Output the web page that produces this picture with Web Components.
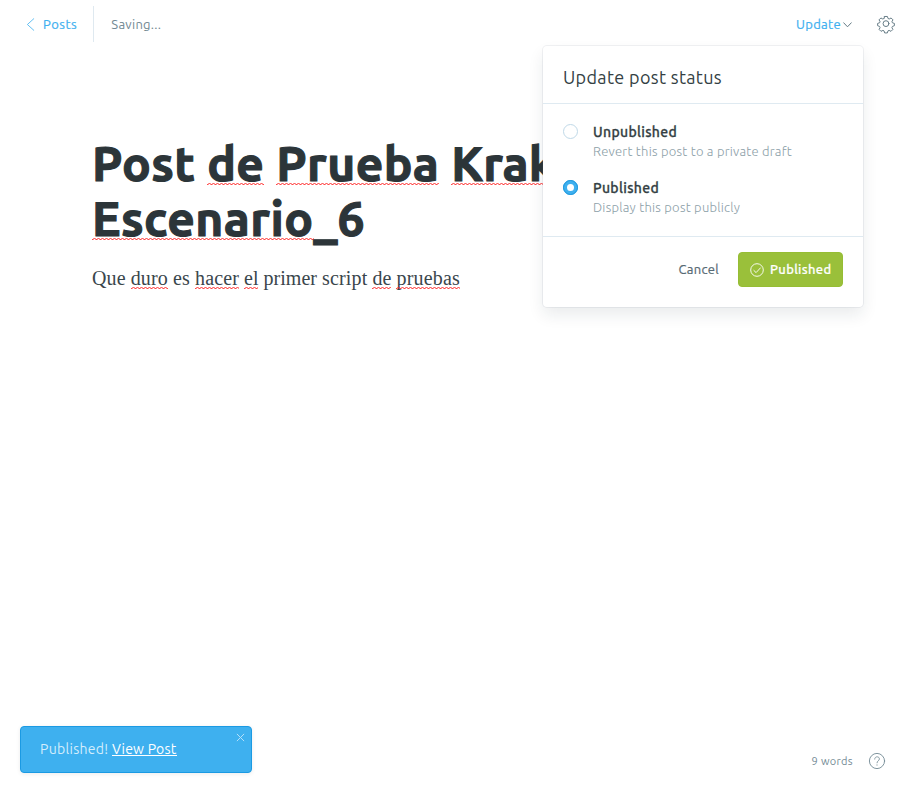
<!DOCTYPE html>
<html lang="es"><head><meta charset="utf-8"><title>Editor</title>
<style>html,body{margin:0;height:100%;background:#fff;overflow:hidden}</style></head><body>
<editor-app></editor-app>
<script>
const define=(name,html,init)=>customElements.define(name,class extends HTMLElement{
  constructor(){super();this.attachShadow({mode:'open'}).innerHTML=html;}
  connectedCallback(){if(init)init.call(this);}
});

/* Text run spaced to a given advance width; "wavy" adds a spelling mark. */
define('text-run',`<style>
:host{display:inline-block;white-space:pre;position:relative}
span{display:inline-block}
:host([wavy])::after{content:"";position:absolute;left:0;right:0;bottom:var(--mark,0px);height:2px;
background:url("data:image/svg+xml,%3Csvg xmlns='http://www.w3.org/2000/svg' width='4' height='2'%3E%3Cpath d='M0 1.5h.8L2.2.5h.6L4.2 1.5' fill='none' stroke='%23ff2020' stroke-width='1'/%3E%3C/svg%3E") repeat-x}
</style><span><slot></slot></span>`,function(){
  const w=+this.getAttribute('w'),s=this.shadowRoot.querySelector('span');
  if(!w)return;
  const n=this.textContent.length;
  this.style.width=w+'px';
  s.style.letterSpacing=((w-s.getBoundingClientRect().width)/n)+'px';
});

define('top-bar',`<style>
:host{display:flex;height:48px;align-items:center;box-sizing:border-box;padding:0 15px 0 26px;font-size:13px;line-height:20px}
.posts{display:flex;align-items:center;color:#3eb0ef;gap:8px;padding-right:16px;height:36px;border-right:1px solid #dfe9f0}
.save{color:#738a94;margin-left:17px;flex:1}
.up{display:flex;align-items:center;color:#3eb0ef;gap:2px;margin-right:26px}
svg{display:block;fill:none;stroke-linecap:round;stroke-linejoin:round}
.posts text-run,.up text-run{-webkit-text-stroke:.2px}
</style>
<div class="posts"><svg width="9" height="13" viewBox="0 0 9 13" stroke="#3eb0ef" stroke-width=".8"><path d="M7.8 .7L1.4 6.5l6.4 5.8"/></svg><text-run w="34.3">Posts</text-run></div>
<div class="save"><text-run w="50">Saving...</text-run></div>
<div class="up"><text-run w="45">Update</text-run><svg width="9" height="6" viewBox="0 0 9 6" stroke="#657b85" stroke-width="1" style="margin-top:1px"><path d="M.7 .8l3.8 4L8.3.8"/></svg></div>
<svg width="16" height="16" viewBox="-8.5 -8.1 17 17" stroke="#657b85" stroke-width="1.05" style="overflow:visible"><circle r="3.1"/><path d="M-1.5-7.6h3l.6 2.1 1.3.6 2-1.1 2 2-1.1 2 .5 1.1 2.1.7v2.4l-2.1.8-.5 1.2 1 2-2 2-2-1-1.2.5-.7 2.2h-2.8l-.7-2.2-1.2-.5-2 1-2-2 1-2-.5-1.2-2.1-.8v-2.4l2.1-.7.5-1.1-1.1-2 2-2 2 1.1 1.3-.6z"/></svg>`);

define('post-body',`<style>
:host{display:block;padding:88px 92px 0;color:#2c3539}
h1{margin:0;font:700 48px/55px Ubuntu,"Open Sans",sans-serif;-webkit-text-stroke:1.1px;--mark:6px}
.line{display:flex;height:55px}
.gap{gap:12px}
p{margin:16px 0 0;display:flex;font:20px/32px "Liberation Serif",serif;color:#3a464c;--mark:5px;gap:5px}
</style>
<h1><div class="line gap"><text-run w="103.3">Post</text-run><text-run w="57" wavy>de</text-run><text-run w="163" wavy>Prueba</text-run><text-run wavy>Krak</text-run></div>
<div class="line"><text-run w="221.5" wavy>Escenario</text-run><text-run w="24">_</text-run><text-run w="28">6</text-run></div></h1>
<p><text-run w="33.7">Que</text-run><text-run w="37.3" wavy>duro</text-run><text-run w="17">es</text-run><text-run w="44" wavy>hacer</text-run><text-run w="14.5" wavy>el</text-run><text-run w="53.5">primer</text-run><text-run w="45.5">script</text-run><text-run w="19" wavy>de</text-run><text-run w="63.5" wavy>pruebas</text-run></p>`);

define('radio-option',`<style>
:host{display:flex;gap:15px;height:40px}
i{box-sizing:border-box;width:15px;height:15px;margin-top:4px;border:1px solid #c0d9e8;border-radius:50%;background:#fff}
:host([checked]) i{border:4px solid #3eb0ef;outline:1px solid #2198dc;outline-offset:-1px}
b,small{display:block}
b{font-size:14px;font-weight:500;-webkit-text-stroke:.3px;color:#343f44;line-height:24px;height:22px}
small{font-size:13px;font-weight:300;color:#8b9ea7;line-height:19px}
</style><i></i><div><b><slot name="title"></slot></b><small><slot></slot></small></div>`);

define('status-menu',`<style>
:host{display:flex;flex-direction:column;position:absolute;left:543px;top:46px;width:320px;height:261px;background:#fff;border-radius:4px;box-shadow:0 0 0 1px rgba(99,114,130,.09),0 8px 16px rgba(27,39,51,.09)}
header{box-sizing:border-box;height:58px;padding:18px 20px 0;border-bottom:1px solid #dfeaf1;font-size:18px;line-height:26px;color:#343f44}
main{box-sizing:border-box;height:133px;padding:16px 20px;border-bottom:1px solid #dfeaf1;display:flex;flex-direction:column;gap:16px}
footer{display:flex;align-items:center;justify-content:flex-end;padding:15px 20px 0;gap:19px;font-size:13px;color:#566973}
footer text-run{padding-bottom:2px;-webkit-text-stroke:.2px}
button{box-sizing:border-box;width:105px;height:35px;border:1px solid #96bd34;border-radius:4px;background:#9ac03a;color:#fff;font:500 13px Ubuntu,"Open Sans",sans-serif;padding:0 0 0 11px;display:flex;align-items:center;gap:6px}
svg{fill:none;stroke:#fff;stroke-width:.9;flex:none}
</style>
<header><text-run w="159">Update post status</text-run></header>
<main><radio-option><text-run slot="title" w="84">Unpublished</text-run><text-run w="199">Revert this post to a private draft</text-run></radio-option>
<radio-option checked><text-run slot="title" w="66">Published</text-run><text-run w="147.2">Display this post publicly</text-run></radio-option></main>
<footer><text-run w="40.5">Cancel</text-run><button><svg width="14" height="14" viewBox="0 0 14 14"><circle cx="7" cy="7" r="6.3"/><path d="M3.6 7.2l2.5 2.4 4.6-5"/></svg><text-run w="61.5">Published</text-run></button></footer>`);

define('toast-note',`<style>
:host{display:flex;box-sizing:border-box;position:absolute;left:20px;top:726px;width:232px;height:47px;padding:12px 6px 0 19px;justify-content:space-between;border:1px solid #1b9ae3;border-radius:4px;background:#3eb0ef;color:#d3edfc;font-size:14px;line-height:20px;box-shadow:0 1px 4px rgba(0,0,0,.08)}
div{display:flex}
a{color:#fff;height:16px;border-bottom:1px solid #fff}
svg{margin-top:-6px}
</style><div><text-run w="72">Published! </text-run><a><text-run w="64.5">View Post</text-run></a></div>
<svg width="9" height="9" viewBox="0 0 9 9" fill="none" stroke="#b5e0f9" stroke-width="1"><path d="M.9.9l7.2 7.2M8.1.9L.9 8.1"/></svg>`);

define('word-count',`<style>
:host{display:flex;align-items:center;gap:15px;position:absolute;right:23px;top:752px;height:18px;font-size:11px;color:#738a94}
svg{fill:none;stroke:#738a94;stroke-linecap:round}
</style><text-run w="41.5">9 words</text-run><svg width="18" height="18" viewBox="0 0 18 18"><circle cx="9" cy="9" r="7.6" stroke-width=".9"/><path d="M6.7 7.1c0-3.2 4.7-2.9 4.7-.2 0 1.9-2.4 1.9-2.4 3.9M9 12.8v.4" stroke-width=".85"/></svg>`);

define('editor-app',`<style>
:host{display:block;position:relative;width:909px;height:793px;overflow:hidden;background:#fff;font-family:Ubuntu,"Open Sans",sans-serif}
</style><top-bar></top-bar><post-body></post-body><status-menu></status-menu><toast-note></toast-note><word-count></word-count>`);
</script></body></html>
